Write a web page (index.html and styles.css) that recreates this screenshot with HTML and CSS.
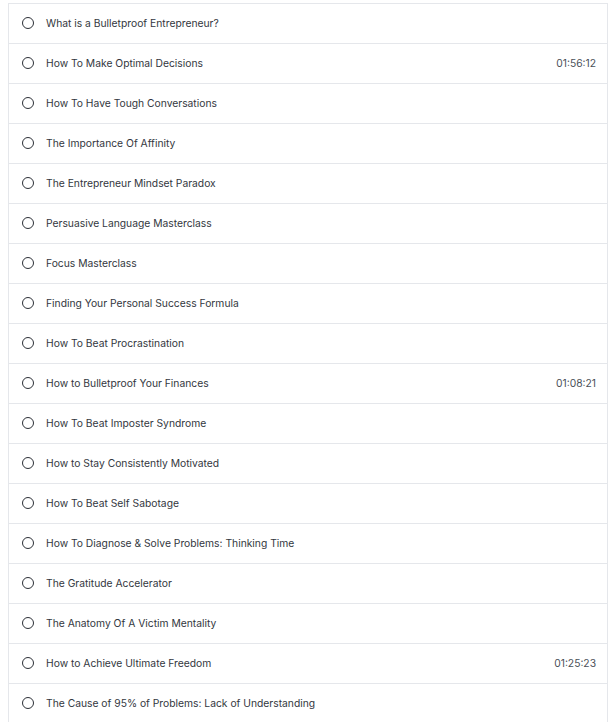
FILE: index.html
```html
<!DOCTYPE html>
<html>
<head>
<meta charset="utf-8">
<link rel="stylesheet" href="styles.css">
</head>
<body>
<ul class="lessons">
  <li class="lesson"><span class="dot"></span><span class="title">What is a Bulletproof Entrepreneur?</span></li>
  <li class="lesson"><span class="dot"></span><span class="title">How To Make Optimal Decisions</span><span class="time">01:56:12</span></li>
  <li class="lesson"><span class="dot"></span><span class="title">How To Have Tough Conversations</span></li>
  <li class="lesson"><span class="dot"></span><span class="title">The Importance Of Affinity</span></li>
  <li class="lesson"><span class="dot"></span><span class="title">The Entrepreneur Mindset Paradox</span></li>
  <li class="lesson"><span class="dot"></span><span class="title">Persuasive Language Masterclass</span></li>
  <li class="lesson"><span class="dot"></span><span class="title">Focus Masterclass</span></li>
  <li class="lesson"><span class="dot"></span><span class="title">Finding Your Personal Success Formula</span></li>
  <li class="lesson"><span class="dot"></span><span class="title">How To Beat Procrastination</span></li>
  <li class="lesson"><span class="dot"></span><span class="title">How to Bulletproof Your Finances</span><span class="time">01:08:21</span></li>
  <li class="lesson"><span class="dot"></span><span class="title">How To Beat Imposter Syndrome</span></li>
  <li class="lesson"><span class="dot"></span><span class="title">How to Stay Consistently Motivated</span></li>
  <li class="lesson"><span class="dot"></span><span class="title">How To Beat Self Sabotage</span></li>
  <li class="lesson"><span class="dot"></span><span class="title">How To Diagnose &amp; Solve Problems: Thinking Time</span></li>
  <li class="lesson"><span class="dot"></span><span class="title">The Gratitude Accelerator</span></li>
  <li class="lesson"><span class="dot"></span><span class="title">The Anatomy Of A Victim Mentality</span></li>
  <li class="lesson"><span class="dot"></span><span class="title">How to Achieve Ultimate Freedom</span><span class="time">01:25:23</span></li>
  <li class="lesson"><span class="dot"></span><span class="title">The Cause of 95% of Problems: Lack of Understanding</span></li>
</ul>
</body>
</html>
```
FILE: styles.css
```css
html, body {
  margin: 0;
  padding: 0;
  background: #ffffff;
}
body {
  padding: 3px 8px 0 8px;
  font-family: Inter, "Noto Sans", sans-serif;
  font-size: 10.3px;
  color: #333740;
}
.lessons {
  list-style: none;
  margin: 0;
  padding: 0;
  border-left: 1px solid #e5e7eb;
  border-right: 1px solid #e5e7eb;
}
.lesson {
  display: flex;
  align-items: center;
  height: 37px;
  padding: 0 11px 2px 13px;
  border-top: 1px solid #e5e7eb;
}
.dot {
  flex: none;
  width: 12px;
  height: 12px;
  box-sizing: border-box;
  border: 1.5px solid #2b2f36;
  border-radius: 50%;
  margin-right: 12px;
}
.title {
  flex: 1;
}
.time {
  color: #4a4f57;
}
```
